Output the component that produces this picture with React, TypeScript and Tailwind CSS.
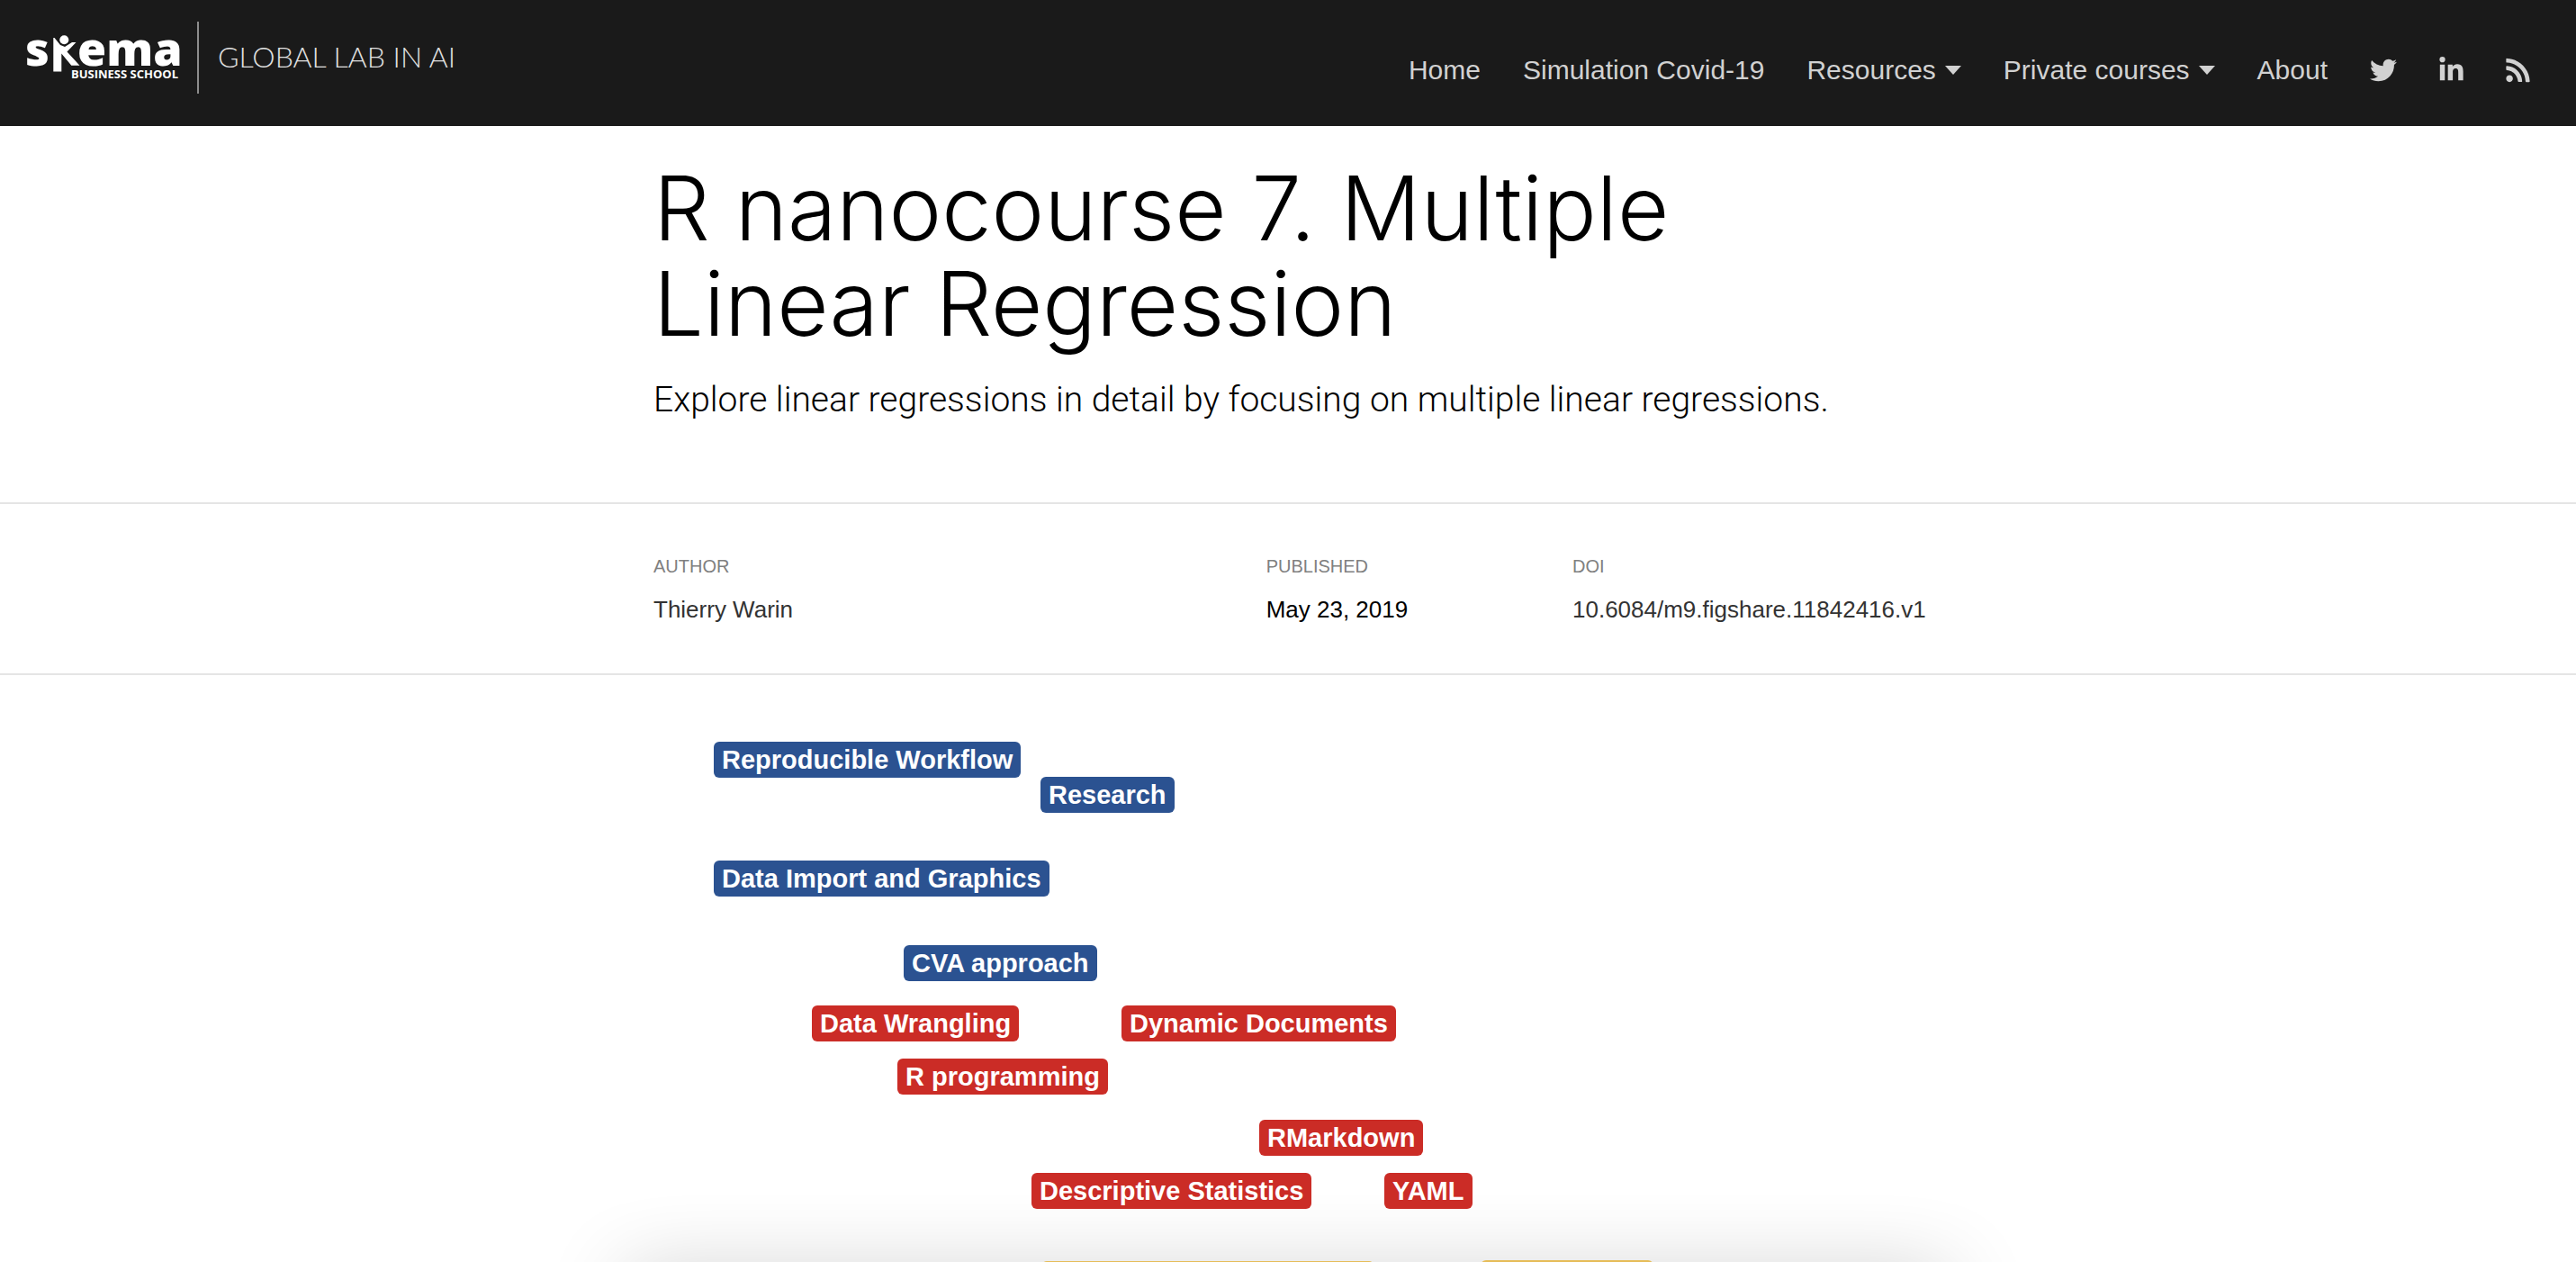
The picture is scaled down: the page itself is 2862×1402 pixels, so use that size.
import { FaTwitter, FaLinkedinIn, FaRss } from "react-icons/fa";

const sans = "font-['Helvetica_Neue','Liberation_Sans',Arial,sans-serif]";
const blue = "bg-[#2b5291]";
const red = "bg-[#cb2c26]";
const yellow = "bg-[#e6bc57]";

const nodes = [
  { label: "Reproducible Workflow", color: blue, x: 67, y: 74 },
  { label: "Research", color: blue, x: 430, y: 113 },
  { label: "Data Import and Graphics", color: blue, x: 67, y: 206 },
  { label: "CVA approach", color: blue, x: 278, y: 300 },
  { label: "Data Wrangling", color: red, x: 176, y: 367 },
  { label: "Dynamic Documents", color: red, x: 520, y: 367 },
  { label: "R programming", color: red, x: 271, y: 426 },
  { label: "RMarkdown", color: red, x: 673, y: 494 },
  { label: "Descriptive Statistics", color: red, x: 420, y: 553 },
  { label: "YAML", color: red, x: 812, y: 553 },
];

function Logo() {
  return (
    <a href="#" aria-label="Skema Business School" className="text-white">
      <svg width="176" height="96" viewBox="-6 -30 176 96" fill="currentColor" className="font-['Open_Sans',sans-serif]">
        <text x="-2" y="35" fontSize="52" fontWeight="800">s</text>
        <path d="M29.300 4 H30.500 L37 12 L42 14 L50 9 H54.500 L44.500 19.500 L58.500 34.700 H49.300 L38.300 21.500 V41.500 H29.300 Z" />
        <circle cx="41.300" cy="6.200" r="5" />
        <text x="56" y="35" fontSize="52" fontWeight="800">ema</text>
        <text x="168" y="49" fontSize="13" fontWeight="700" textAnchor="end">BUSINESS SCHOOL</text>
      </svg>
    </a>
  );
}

function Caret() {
  return (
    <svg width="18" height="10" viewBox="0 0 18 10" fill="currentColor" aria-hidden="true">
      <path d="M0 0H18L9 10Z" />
    </svg>
  );
}

export default function App() {
  return (
    <div className={`flex h-screen flex-col overflow-hidden bg-white text-black ${sans}`}>
      <header className="flex h-[140px] shrink-0 items-start justify-between bg-[#1a1a1a] pl-6 pr-[51px]">
        <div className="flex items-start">
          <div className="pt-2"><Logo /></div>
          <span className="ml-[19px] mt-6 h-20 w-[2px] bg-[#8c8c8c]" />
          <a href="#" className="ml-[21px] pt-11 font-[Lato,sans-serif] text-[32px] font-light leading-[38px] text-[#e0e0e0]">GLOBAL LAB IN AI</a>
        </div>
        <nav className="flex h-[156px] items-center gap-[47px] text-[30px] leading-[36px] text-[#d1d1d1]">
          <a href="#">Home</a>
          <a href="#">Simulation Covid-19</a>
          <button className="flex items-center gap-2.5">Resources <Caret /></button>
          <button className="flex items-center gap-2.5">Private courses <Caret /></button>
          <a href="#">About</a>
          <a href="#" aria-label="Twitter"><FaTwitter className="h-[30px] w-[30px]" /></a>
          <a href="#" aria-label="LinkedIn"><FaLinkedinIn className="h-[30px] w-[27px]" /></a>
          <a href="#" aria-label="RSS"><FaRss className="h-[30px] w-[27px]" /></a>
        </nav>
      </header>

      <section className="shrink-0 border-b-2 border-[#e5e5e5]">
        <div className="mx-auto h-[418px] max-w-[1410px] pt-[38px]">
          <h1 className="max-w-[1300px] font-[Inter,sans-serif] text-[99px] font-light leading-[106px]">
            R nanocourse 7. Multiple Linear Regression
          </h1>
          <p className="mt-6 font-[Roboto,sans-serif] text-[39px] font-light leading-[60px]">
            Explore linear regressions in detail by focusing on multiple linear regressions.
          </p>
        </div>
      </section>

      <section className="shrink-0 border-b-2 border-[#e5e5e5]">
        <dl className="mx-auto grid h-[188px] max-w-[1410px] grid-cols-[2fr_1fr_389px] pt-[52px] text-[26px]">
          <div>
            <dt className="text-[20px] leading-[34px] text-[#808080]">AUTHOR</dt>
            <dd className="pt-2 leading-[46px] text-[#333333]"><a href="#">Thierry Warin</a></dd>
          </div>
          <div>
            <dt className="text-[20px] leading-[34px] text-[#808080]">PUBLISHED</dt>
            <dd className="pt-2 leading-[46px]">May 23, 2019</dd>
          </div>
          <div>
            <dt className="text-[20px] leading-[34px] text-[#808080]">DOI</dt>
            <dd className="pt-2 leading-[46px] text-[#333333]"><a href="#">10.6084/m9.figshare.11842416.v1</a></dd>
          </div>
        </dl>
      </section>

      <main className="relative min-h-0 flex-1 overflow-hidden">
        <div className="absolute inset-x-0 -bottom-[60px] mx-auto h-10 max-w-[1470px] rounded-lg shadow-[0_0_90px_rgba(0,0,0,0.3)]" />
        <div className="relative mx-auto h-full max-w-[1410px]">
          {nodes.map((n) => (
            <span
              key={n.label}
              className={`absolute whitespace-nowrap rounded-md px-[9px] text-[29px] font-bold leading-[40px] text-white ${n.color}`}
              style={{ left: n.x, top: n.y }}
            >
              {n.label}
            </span>
          ))}
          <span className={`absolute left-[431px] top-[651px] h-10 w-[370px] rounded-md ${yellow}`} />
          <span className={`absolute left-[919px] top-[650px] h-10 w-[192px] rounded-md ${yellow}`} />
        </div>
      </main>
    </div>
  );
}
